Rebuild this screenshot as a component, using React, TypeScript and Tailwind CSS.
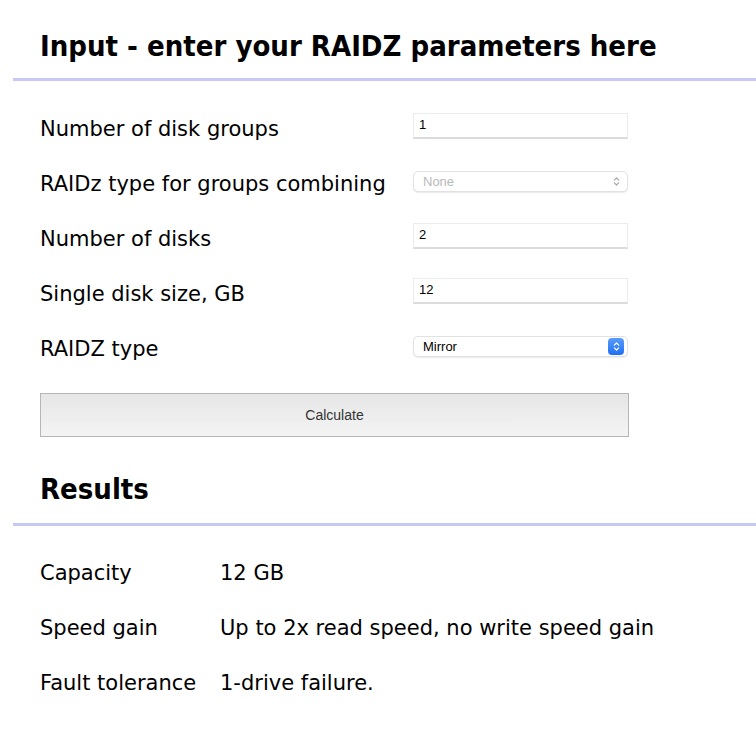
import { useState } from 'react'

const face = "font-['DejaVu_Sans',sans-serif]"
const heading = "font-['DejaVu_Sans_Condensed','DejaVu_Sans',sans-serif]"
const ui = "font-['Liberation_Sans',Arial,sans-serif]"

function Chevrons({ className }: { className?: string }) {
  return (
    <svg viewBox="0 0 8 12" className={className} fill="none" stroke="currentColor" strokeWidth="1.4" strokeLinecap="round" strokeLinejoin="round">
      <path d="M1.5 4.5 4 2l2.5 2.5" />
      <path d="M1.5 7.5 4 10l2.5-2.5" />
    </svg>
  )
}

function TextField({ value }: { value: string }) {
  return (
    <div className={`${ui} mb-[8px] flex h-[26px] w-[215px] items-center border-x border-t border-[#ececec] border-b-2 border-b-[#dcdcdc] bg-white pl-[5px] text-[13px] text-black`}>
      {value}
    </div>
  )
}

function SelectField({ value, disabled }: { value: string; disabled?: boolean }) {
  return (
    <div
      className={`${ui} mb-[6px] flex h-[21px] w-[215px] items-center justify-between rounded-[5px] border border-[#e2e2e2] bg-white pl-[9px] pr-[3px] text-[13px] shadow-[0_1px_1px_rgba(0,0,0,0.08)] ${
        disabled ? 'text-[#b9b9b9]' : 'text-black'
      }`}
    >
      <span>{value}</span>
      {disabled ? (
        <Chevrons className="mr-[4px] h-[11px] w-[7px] text-[#a8a8a8]" />
      ) : (
        <span className="flex h-[17px] w-[16px] items-center justify-center rounded-[4px] bg-gradient-to-b from-[#5a9cfb] to-[#1e6ff5]">
          <Chevrons className="h-[11px] w-[7px] text-white" />
        </span>
      )}
    </div>
  )
}

function Row({ label, children }: { label: string; children: React.ReactNode }) {
  return (
    <div className="flex h-[55px] items-center">
      <div className="w-[373px] text-[21px]">{label}</div>
      {children}
    </div>
  )
}

function Section({ title, gap }: { title: string; gap: string }) {
  return (
    <h2 className={`${heading} ml-[13px] border-b-[3px] border-[#c8c8f7] pl-[27px] text-[29px] font-bold leading-none`}>
      <span className={`block ${gap}`}>{title}</span>
    </h2>
  )
}

export default function App() {
  const [done] = useState(true)

  return (
    <div className={`${face} min-h-[750px] bg-white pt-[32px] text-black`}>
      <Section title="Input - enter your RAIDZ parameters here" gap="pb-[17px]" />

      <div className="pl-[40px] pt-[21px]">
        <Row label="Number of disk groups">
          <TextField value="1" />
        </Row>
        <Row label="RAIDz type for groups combining">
          <SelectField value="None" disabled />
        </Row>
        <Row label="Number of disks">
          <TextField value="2" />
        </Row>
        <Row label="Single disk size, GB">
          <TextField value="12" />
        </Row>
        <Row label="RAIDZ type">
          <SelectField value="Mirror" />
        </Row>

        <button
          type="button"
          className={`${ui} mt-[16px] h-[44px] w-[589px] border border-[#b6b6b6] bg-gradient-to-b from-[#e6e6e6] to-[#f4f4f4] text-[14px] text-[#333]`}
        >
          Calculate
        </button>
      </div>

      <div className="pt-[38px]">
        <Section title="Results" gap="pb-[19px]" />
      </div>

      {done && (
        <div className="pl-[40px] pt-[20px] text-[21px]">
          {[
            ['Capacity', '12 GB'],
            ['Speed gain', 'Up to 2x read speed, no write speed gain'],
            ['Fault tolerance', '1-drive failure.'],
          ].map(([k, v]) => (
            <div key={k} className="flex h-[55px] items-center">
              <div className="w-[180px]">{k}</div>
              <div>{v}</div>
            </div>
          ))}
        </div>
      )}
    </div>
  )
}
